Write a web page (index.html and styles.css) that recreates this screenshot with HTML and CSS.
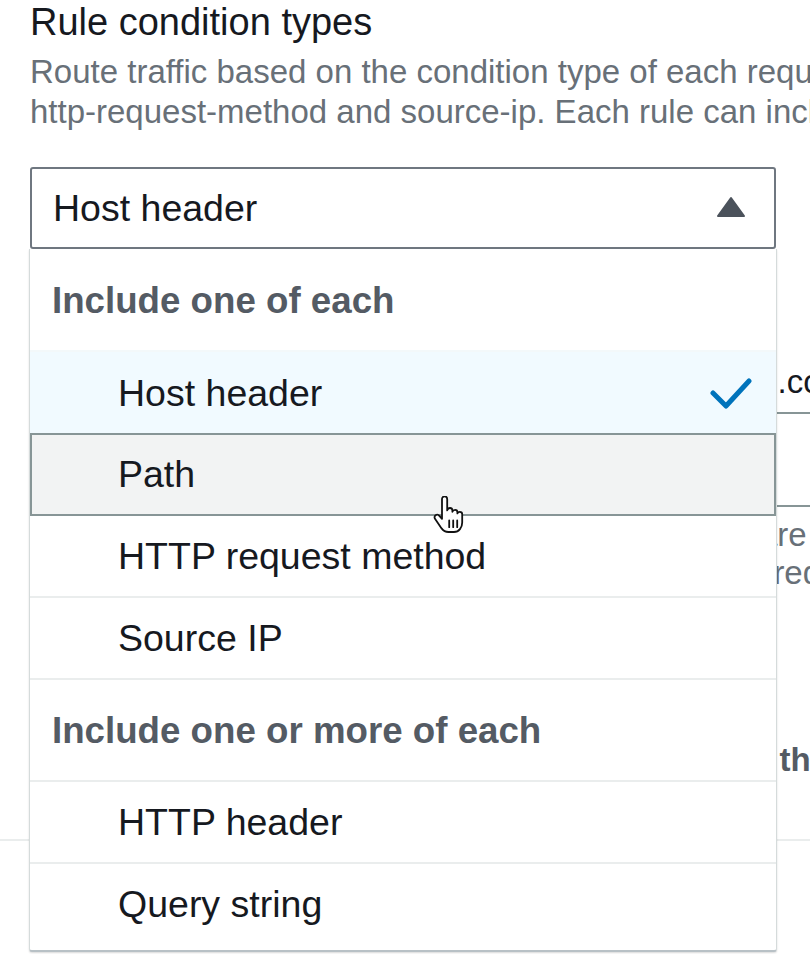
FILE: index.html
```html
<!DOCTYPE html>
<html lang="en">
<head>
<meta charset="utf-8">
<title>Rule condition types</title>
<link rel="stylesheet" href="styles.css">
</head>
<body>
<main class="page">
  <section class="intro">
    <h2 class="title">Rule condition types</h2>
    <p class="desc">
      <span class="desc-line">Route traffic based on the condition type of each request. Supported types are host-header, path,</span>
      <span class="desc-line">http-request-method and source-ip. Each rule can include zero or one of each of these conditions.</span>
    </p>
  </section>

  <div class="field">
    <div class="select-wrap">
      <div class="select">
        <span class="select-value">Host header</span>
        <svg class="caret" width="30" height="22" viewBox="0 0 30 22" aria-hidden="true">
          <polygon points="2,20 15,2 28,20" fill="#4b525b" stroke="#4b525b" stroke-width="2" stroke-linejoin="round"/>
        </svg>
      </div>

      <div class="dropdown" role="listbox">
        <div class="group-label">Include one of each</div>
        <div class="option selected" role="option">
          <span>Host header</span>
          <svg class="check" width="42" height="34" viewBox="0 0 42 34" aria-hidden="true">
            <polyline points="3,16 16,29 39,4" fill="none" stroke="#0073bb" stroke-width="5" stroke-linecap="round" stroke-linejoin="round"/>
          </svg>
        </div>
        <div class="option hovered" role="option"><span>Path</span></div>
        <div class="option" role="option"><span>HTTP request method</span></div>
        <div class="option" role="option"><span>Source IP</span></div>
        <div class="group-label">Include one or more of each</div>
        <div class="option" role="option"><span>HTTP header</span></div>
        <div class="option last" role="option"><span>Query string</span></div>

        <svg class="cursor" width="36" height="38" viewBox="0 0 18 19" aria-hidden="true">
          <path d="M6 1.5C6 0.7 6.6 0.2 7.3 0.2C8 0.2 8.6 0.7 8.6 1.5L8.6 7.2C8.8 6.4 9.4 6 10 6C10.7 6 11.2 6.5 11.2 7.2L11.2 7.9C11.4 7.3 12 6.9 12.6 6.9C13.2 6.9 13.7 7.4 13.7 8.1L13.7 8.7C13.9 8.2 14.4 7.9 14.9 7.9C15.6 7.9 16.1 8.4 16.1 9.1L16.1 13.2C16.1 15.8 14.5 18 12 18L9.2 18C7.7 18 6.6 17.3 5.8 16.2L2.5 11.4C2.1 10.8 2.2 10 2.8 9.6C3.4 9.2 4.2 9.3 4.7 9.9L6 11.4Z" fill="#ffffff" stroke="#111111" stroke-width="0.9" stroke-linejoin="round"/>
          <path d="M9.6 12.2V15.6M11.6 12.2V15.6M13.6 12.2V15.6" stroke="#111111" stroke-width="0.9" stroke-linecap="round"/>
        </svg>
      </div>
    </div>
  </div>

  <section class="under" aria-hidden="true">
    <div class="u-field"><span class="u-value">www.example.com</span></div>
    <div class="u-box"></div>
    <p class="u-help">
      <span class="u-line u-line-1">are allowed</span>
      <span class="u-line u-line-2">required</span>
    </p>
    <div class="u-label">on this rule</div>
    <div class="u-rule"></div>
  </section>
</main>
</body>
</html>
```

FILE: styles.css
```css
html, body {
  margin: 0;
  padding: 0;
  width: 810px;
  height: 954px;
  overflow: hidden;
  background: #ffffff;
}

body {
  font-family: "Liberation Sans", Arial, sans-serif;
  color: #16191f;
}

.page {
  position: relative;
  width: 810px;
}

.intro {
  padding-left: 30px;
}

.title {
  margin: 0;
  font-size: 38px;
  line-height: 44px;
  font-weight: normal;
  color: #16191f;
  white-space: nowrap;
}

.desc {
  margin: 8px 0 0;
  font-size: 33px;
  line-height: 40px;
  color: #687078;
}

.desc-line {
  display: block;
  white-space: nowrap;
}

.field {
  margin-top: 35px;
  padding-left: 30px;
}

.select-wrap {
  position: relative;
  width: 746px;
}

.select {
  box-sizing: border-box;
  height: 82px;
  border: 2px solid #6f7780;
  border-radius: 3px;
  display: flex;
  align-items: center;
  justify-content: space-between;
  padding: 0 28px 0 21px;
  font-size: 37.5px;
  color: #16191f;
}

.caret {
  display: block;
  margin-top: -2px;
}

.dropdown {
  position: absolute;
  top: 100%;
  left: -1px;
  right: -1px;
  z-index: 5;
  background: #ffffff;
  border: 1px solid #d5dbdb;
  border-top: none;
  border-bottom: 2px solid #b8c1c6;
  border-radius: 0 0 3px 3px;
  box-shadow: 0 1px 2px rgba(0, 0, 0, 0.15);
}

.group-label {
  box-sizing: border-box;
  height: 102px;
  display: flex;
  align-items: center;
  padding-left: 22px;
  padding-top: 2px;
  border-bottom: 2px solid #eaeded;
  font-size: 36.7px;
  font-weight: bold;
  color: #545b64;
  white-space: nowrap;
}

.group-label:first-child {
  height: 103px;
  border-bottom-color: #f3f8fa;
}

.option {
  box-sizing: border-box;
  height: 82px;
  display: flex;
  align-items: center;
  justify-content: space-between;
  padding: 0 24px 0 88px;
  border-bottom: 2px solid #eaeded;
  font-size: 37.5px;
  color: #16191f;
  white-space: nowrap;
}

.option.selected {
  background: #f1faff;
  border-bottom-color: #f1faff;
  height: 81px;
  padding-top: 4px;
}

.option.hovered {
  height: 83px;
  background: #f2f3f3;
  border: 2px solid #879596;
  padding-left: 86px;
}

.option.last {
  height: 86px;
  padding-bottom: 6px;
  border-bottom: none;
}

.check {
  display: block;
}

.cursor {
  position: absolute;
  left: 400px;
  top: 247px;
  pointer-events: none;
}

/* page content lying underneath the open dropdown */
.under {
  position: relative;
  z-index: 1;
}

.u-field {
  box-sizing: border-box;
  height: 165px;
  margin-left: 574px;
  border-bottom: 2px solid #879596;
  display: flex;
  align-items: flex-end;
  padding-bottom: 10px;
}

.u-value {
  font-size: 33px;
  line-height: 40px;
  color: #16191f;
  white-space: nowrap;
}

.u-box {
  box-sizing: border-box;
  height: 93px;
  margin-left: 574px;
  border-bottom: 2px solid #879596;
}

.u-help {
  margin: 9px 0 0;
  font-size: 33px;
  line-height: 38px;
  color: #687078;
}

.u-line {
  display: block;
  white-space: nowrap;
}

.u-line-1 {
  padding-left: 759px;
}

.u-line-2 {
  padding-left: 700px;
}

.u-label {
  margin-top: 148px;
  padding-left: 730px;
  font-size: 33px;
  line-height: 40px;
  font-weight: bold;
  color: #545b64;
  white-space: nowrap;
}

.u-rule {
  margin-top: 59px;
  border-top: 2px solid #eaeded;
}
```
